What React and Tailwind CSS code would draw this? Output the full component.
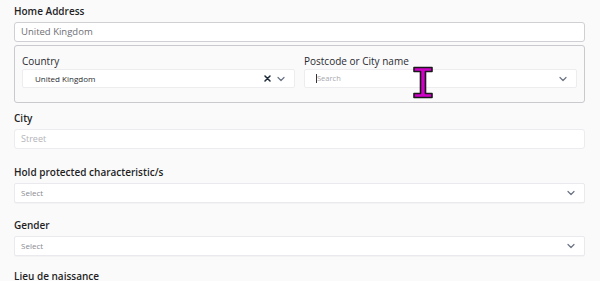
import React from "react";

const Chevron = () => (
  <svg width="8" height="6" viewBox="0 0 8 6" className="text-gray-500">
    <path d="M1 1.5 L4 4.5 L7 1.5" fill="none" stroke="currentColor" strokeWidth="1.2" strokeLinecap="round" strokeLinejoin="round" />
  </svg>
);

const Cross = () => (
  <svg width="7" height="7" viewBox="0 0 7 7" className="text-gray-800">
    <path d="M1 1 L6 6 M6 1 L1 6" fill="none" stroke="currentColor" strokeWidth="1.5" strokeLinecap="round" />
  </svg>
);

const Label = ({ children, className = "" }) => (
  <div className={`text-[10px] leading-[14px] font-semibold text-[#1f1f24] ${className}`}>{children}</div>
);

const SelectBox = ({ placeholder }) => (
  <div className="mt-1 h-[20px] bg-white border border-[#e9e9ee] rounded-[2px] shadow-[0_1px_1px_rgba(0,0,0,0.03)] flex items-center justify-between pl-[6px] pr-[9px]">
    <span className="text-[8px] text-[#8a8a92]">{placeholder}</span>
    <Chevron />
  </div>
);

export default function App() {
  return (
    <div
      className="relative w-[600px] h-[281px] overflow-hidden bg-[#fafafb] pl-[14px] pr-[15px] pt-[4px]"
      style={{ fontFamily: '"Open Sans", "Liberation Sans", sans-serif' }}
    >
      <Label>Home Address</Label>
      <div className="mt-1 h-[20px] bg-white border border-[#cfcfd4] rounded-[3px] flex items-center px-[6px]">
        <span className="text-[9.5px] text-[#6e6e74]">United Kingdom</span>
      </div>

      {/* Address group */}
      <div className="mt-[3px] border border-[#c9c9ce] rounded-[3px] px-[7px] pt-[9px] pb-[14px] grid grid-cols-2 gap-x-[9px]">
        <div>
          <div className="text-[10px] leading-[12px] text-[#2a2a30]">Country</div>
          <div className="mt-[2px] h-[19px] bg-white border border-[#ededf0] rounded-[2px] flex items-center justify-between pl-[12px] pr-[9px]">
            <span className="text-[8px] font-medium text-[#2a2a30]">United Kingdom</span>
            <div className="flex items-center gap-[6px]">
              <Cross />
              <Chevron />
            </div>
          </div>
        </div>
        <div>
          <div className="text-[10px] leading-[12px] text-[#2a2a30]">Postcode or City name</div>
          <div className="mt-[2px] h-[19px] bg-white border border-[#ededf0] rounded-[2px] flex items-center justify-between pl-[11px] pr-[9px]">
            <div className="flex items-center">
              <span className="w-px h-[9px] bg-[#333]" />
              <span className="text-[7.5px] text-[#a8a8ae]">Search</span>
            </div>
            <Chevron />
          </div>
        </div>
      </div>

      <Label className="mt-2">City</Label>
      <div className="mt-1 h-[20px] bg-white border border-[#ececf0] rounded-[3px] flex items-center px-[6px]">
        <span className="text-[9px] text-[#b4b4ba]">Street</span>
      </div>

      <Label className="mt-4">Hold protected characteristic/s</Label>
      <SelectBox placeholder="Select" />

      <Label className="mt-[15px]">Gender</Label>
      <SelectBox placeholder="Select" />

      <div className="mt-[14px] text-[10px] leading-[12px] font-semibold text-[#1f1f24]">Lieu de naissance</div>

      {/* text cursor overlay */}
      <svg className="absolute left-[412px] top-[66px]" width="22" height="33" viewBox="0 0 22 33">
        <path
          d="M2 1.5 H20 V5.5 H13.5 V27.5 H20 V31.5 H2 V27.5 H8.5 V5.5 H2 Z"
          fill="#d000c8"
          stroke="#1a1a1a"
          strokeWidth="1.6"
          strokeLinejoin="round"
        />
      </svg>
    </div>
  );
}
